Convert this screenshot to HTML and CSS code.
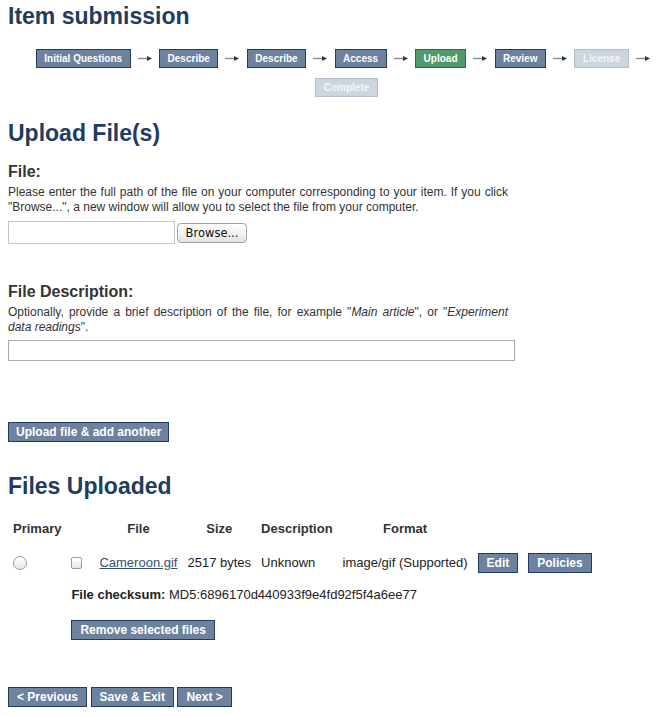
FILE: index.html
```html
<!DOCTYPE html>
<html lang="en">
<head>
    <meta charset="UTF-8">
    <meta name="viewport" content="width=device-width, initial-scale=1.0">
    <title>Item submission - Upload</title>
    <link rel="stylesheet" href="styles.css">
</head>
<body>
    <div class="page">
        <h1 class="title">Item submission</h1>

        <ol class="progress">
            <li class="step"><span class="stepButton">Initial Questions</span><span class="arrow"><svg width="14" height="7" viewBox="0 0 14 7"><line x1="0" y1="3.5" x2="10" y2="3.5" stroke="#8a8a8a" stroke-width="1.4"/><polygon points="9,1 14,3.5 9,6" fill="#2b3a4e"/></svg></span></li>
            <li class="step"><span class="stepButton">Describe</span><span class="arrow"><svg width="14" height="7" viewBox="0 0 14 7"><line x1="0" y1="3.5" x2="10" y2="3.5" stroke="#8a8a8a" stroke-width="1.4"/><polygon points="9,1 14,3.5 9,6" fill="#2b3a4e"/></svg></span></li>
            <li class="step"><span class="stepButton">Describe</span><span class="arrow"><svg width="14" height="7" viewBox="0 0 14 7"><line x1="0" y1="3.5" x2="10" y2="3.5" stroke="#8a8a8a" stroke-width="1.4"/><polygon points="9,1 14,3.5 9,6" fill="#2b3a4e"/></svg></span></li>
            <li class="step"><span class="stepButton">Access</span><span class="arrow"><svg width="14" height="7" viewBox="0 0 14 7"><line x1="0" y1="3.5" x2="10" y2="3.5" stroke="#8a8a8a" stroke-width="1.4"/><polygon points="9,1 14,3.5 9,6" fill="#2b3a4e"/></svg></span></li>
            <li class="step"><span class="stepButton current">Upload</span><span class="arrow"><svg width="14" height="7" viewBox="0 0 14 7"><line x1="0" y1="3.5" x2="10" y2="3.5" stroke="#8a8a8a" stroke-width="1.4"/><polygon points="9,1 14,3.5 9,6" fill="#2b3a4e"/></svg></span></li>
            <li class="step"><span class="stepButton">Review</span><span class="arrow"><svg width="14" height="7" viewBox="0 0 14 7"><line x1="0" y1="3.5" x2="10" y2="3.5" stroke="#8a8a8a" stroke-width="1.4"/><polygon points="9,1 14,3.5 9,6" fill="#2b3a4e"/></svg></span></li>
            <li class="step"><span class="stepButton disabled">License</span><span class="arrow"><svg width="14" height="7" viewBox="0 0 14 7"><line x1="0" y1="3.5" x2="10" y2="3.5" stroke="#8a8a8a" stroke-width="1.4"/><polygon points="9,1 14,3.5 9,6" fill="#2b3a4e"/></svg></span></li>
            <li class="step"><span class="stepButton disabled">Complete</span></li>
        </ol>

        <h2 class="sectionTitle">Upload File(s)</h2>

        <form id="uploadForm" enctype="multipart/form-data">
            <label for="filePath" class="fieldLabel">File:</label>
            <p class="fieldHelp">Please enter the full path of the file on your computer corresponding to your item. If you click "Browse...", a new window will allow you to select the file from your computer.</p>
            <div class="fileRow">
                <input type="text" id="filePath" class="filePath">
                <button type="button" class="browseButton">Browse...</button>
            </div>

            <label for="fileDescription" class="fieldLabel descLabel">File Description:</label>
            <p class="fieldHelp">Optionally, provide a brief description of the file, for example "<i>Main article</i>", or "<i>Experiment</i> <i>data readings</i>".</p>
            <input type="text" id="fileDescription" class="descInput">

            <button type="button" class="actionButton uploadButton">Upload file &amp; add another</button>
        </form>

        <h2 class="sectionTitle filesTitle">Files Uploaded</h2>

        <table class="filesTable">
            <thead>
                <tr>
                    <th class="primaryCol">Primary</th>
                    <th class="selectCol"></th>
                    <th>File</th>
                    <th>Size</th>
                    <th>Description</th>
                    <th>Format</th>
                    <th></th>
                    <th></th>
                </tr>
            </thead>
            <tbody>
                <tr class="fileRowItem">
                    <td class="primaryCol"><input type="radio" name="primary" class="radio"></td>
                    <td class="selectCol"><input type="checkbox" class="checkbox"></td>
                    <td><a href="#" class="fileLink">Cameroon.gif</a></td>
                    <td>2517 bytes</td>
                    <td>Unknown</td>
                    <td>image/gif (Supported)</td>
                    <td><button type="button" class="actionButton">Edit</button></td>
                    <td><button type="button" class="actionButton">Policies</button></td>
                </tr>
                <tr class="checksumRow">
                    <td></td>
                    <td colspan="7"><b>File checksum:</b> MD5:6896170d440933f9e4fd92f5f4a6ee77</td>
                </tr>
                <tr class="removeRow">
                    <td></td>
                    <td colspan="7"><button type="button" class="actionButton">Remove selected files</button></td>
                </tr>
            </tbody>
        </table>

        <div class="navButtons">
            <button type="button" class="actionButton">&lt; Previous</button>
            <button type="button" class="actionButton">Save &amp; Exit</button>
            <button type="button" class="actionButton">Next &gt;</button>
        </div>
    </div>
</body>
</html>
```

FILE: styles.css
```css
/* submission page */
body {
    font-family: "Liberation Sans", Arial, Helvetica, sans-serif;
    color: #333;
    background-color: #fff;
    margin: 0;
    padding: 0;
    overflow: hidden;
}

.page {
    padding: 0 8px;
}

.title, .sectionTitle {
    font-size: 23px;
    line-height: 28px;
    font-weight: bold;
    color: #203c5e;
    margin: 2px 0 0;
}

.sectionTitle {
    margin-top: 22px;
}

.filesTitle {
    margin-top: 30px;
}

/* progress steps */
.progress {
    display: flex;
    flex-wrap: wrap;
    justify-content: center;
    row-gap: 10px;
    list-style: none;
    margin: 19px -8px 0 26px;
    padding: 0;
}

.step {
    display: flex;
    align-items: center;
}

.stepButton {
    display: block;
    font-size: 10px;
    line-height: 17px;
    font-weight: bold;
    color: #fff;
    background-color: #6c829f;
    border: 1px solid #1f3b5d;
    padding: 0 7.5px;
    white-space: nowrap;
}

.stepButton.current {
    background-color: #4f9a6c;
    border-color: #2a6b40;
}

.stepButton.disabled {
    background-color: #cdd5df;
    border-color: #b3becb;
    color: #f4f6f9;
}

.arrow {
    display: block;
    width: 14px;
    height: 7px;
    margin: 0 7.5px 0 7px;
}

.arrow svg {
    display: block;
}

/* form */
.fieldLabel {
    display: block;
    font-size: 16px;
    line-height: 20px;
    font-weight: bold;
    color: #333;
    margin-top: 15px;
}

.descLabel {
    margin-top: 38px;
}

.fieldHelp {
    font-size: 12px;
    line-height: 15px;
    color: #333;
    max-width: 500px;
    text-align: justify;
    margin: 3px 0 0;
}

.fileRow {
    display: flex;
    align-items: center;
    margin-top: 6px;
}

.filePath {
    width: 167px;
    height: 23px;
    box-sizing: border-box;
    border: 1px solid #c6c6c6;
    margin: 0;
    padding: 2px;
}

.browseButton {
    height: 20px;
    width: 70px;
    margin-left: 2px;
    padding: 0;
    font-family: "DejaVu Sans", sans-serif;
    font-size: 11.5px;
    color: #111;
    border: 1px solid #a2a2a2;
    border-radius: 4px;
    background: linear-gradient(#ffffff, #f3f3f3 50%, #e3e3e3);
}

.descInput {
    display: block;
    width: 507px;
    height: 21px;
    box-sizing: border-box;
    border: 1px solid #aaa;
    margin: 5px 0 0;
    padding: 2px;
}

.actionButton {
    font-family: "Liberation Sans", Arial, sans-serif;
    font-size: 12px;
    line-height: 18px;
    font-weight: bold;
    color: #fff;
    background-color: #6c829f;
    border: 1px solid #1f3b5d;
    border-radius: 0;
    padding: 0 8px;
    margin: 0;
    white-space: nowrap;
    cursor: pointer;
}

.uploadButton {
    display: block;
    margin-top: 61px;
    padding: 0 7px;
}

/* uploaded files table */
.filesTable {
    border-collapse: separate;
    border-spacing: 0;
    margin-top: 16px;
    font-size: 13px;
    line-height: 16px;
    color: #222;
}

.filesTable th {
    font-weight: bold;
    color: #333;
    text-align: center;
    padding: 5px 5px 10px;
}

.filesTable th.primaryCol {
    text-align: left;
}

.filesTable td {
    padding: 5px;
    vertical-align: middle;
    white-space: nowrap;
}

.fileRowItem td {
    padding-top: 6px;
    padding-bottom: 9px;
}

.selectCol {
    width: 18px;
}

.removeRow td {
    padding-top: 12px;
}

.radio {
    appearance: none;
    display: block;
    width: 14px;
    height: 14px;
    margin: 0;
    border: 1px solid #9c9c9c;
    border-radius: 50%;
    background: linear-gradient(#ffffff, #e6e6e6);
    box-sizing: border-box;
}

.checkbox {
    appearance: none;
    display: block;
    width: 11px;
    height: 12px;
    margin: 0;
    border: 1px solid #9c9c9c;
    border-radius: 2px;
    background: linear-gradient(#ffffff, #e6e6e6);
    box-sizing: border-box;
}

.fileLink {
    color: #34506f;
    text-decoration: underline;
}

.navButtons {
    display: flex;
    gap: 3.5px;
    margin-top: 42px;
}
```
